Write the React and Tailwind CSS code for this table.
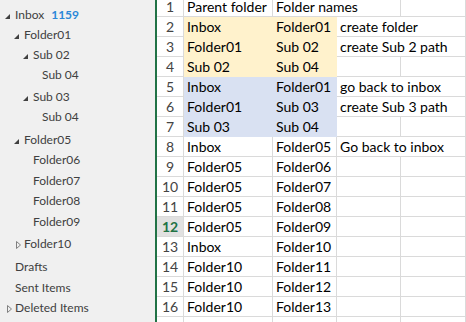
import React from "react"

const tree = [
  { label: "Inbox", level: 0, icon: "open", count: "1159" },
  { label: "Folder01", level: 1, icon: "open" },
  { label: "Sub 02", level: 2, icon: "open" },
  { label: "Sub 04", level: 3 },
  { label: "Sub 03", level: 2, icon: "open", mt: "mt-[2px]" },
  { label: "Sub 04", level: 3 },
  { label: "Folder05", level: 1, icon: "open", mt: "mt-[3px]" },
  { label: "Folder06", level: 2 },
  { label: "Folder07", level: 2, mt: "mt-[1px]" },
  { label: "Folder08", level: 2 },
  { label: "Folder09", level: 2, mt: "mt-[1px]" },
  { label: "Folder10", level: 1, icon: "closed", mt: "mt-[2px]" },
  { label: "Drafts", level: 0, mt: "mt-[3px]" },
  { label: "Sent Items", level: 0, mt: "mt-[1px]" },
  { label: "Deleted Items", level: 0, icon: "closed" },
]

const indent = ["pl-[5px]", "pl-[14px]", "pl-[23px]", "pl-[32px]"]

// fill: y = yellow, b = blue
const rows = [
  { n: 1, a: "Parent folder", b: "Folder names", spanB: true },
  { n: 2, a: "Inbox", b: "Folder01", c: "create folder", fill: "y" },
  { n: 3, a: "Folder01", b: "Sub 02", c: "create Sub 2 path", fill: "y" },
  { n: 4, a: "Sub 02", b: "Sub 04", fill: "y" },
  { n: 5, a: "Inbox", b: "Folder01", c: "go back to inbox", fill: "b" },
  { n: 6, a: "Folder01", b: "Sub 03", c: "create Sub 3 path", fill: "b" },
  { n: 7, a: "Sub 03", b: "Sub 04", fill: "b" },
  { n: 8, a: "Inbox", b: "Folder05", c: "Go back to inbox" },
  { n: 9, a: "Folder05", b: "Folder06" },
  { n: 10, a: "Folder05", b: "Folder07" },
  { n: 11, a: "Folder05", b: "Folder08" },
  { n: 12, a: "Folder05", b: "Folder09", active: true },
  { n: 13, a: "Inbox", b: "Folder10" },
  { n: 14, a: "Folder10", b: "Folder11" },
  { n: 15, a: "Folder10", b: "Folder12" },
  { n: 16, a: "Folder10", b: "Folder13" },
  { n: 17, a: "Folder10", b: "Folder14" },
]

const fills = {
  y: "bg-[#fff2cc] border-[#fff2cc]",
  b: "bg-[#d9e1f2] border-[#d9e1f2]",
}

const Arrow = ({ type }) => {
  if (type === "open") {
    return (
      <svg width="5" height="5" viewBox="0 0 5 5" className="mt-[2px]">
        <polygon points="5,0 5,5 0,5" fill="#404040" />
      </svg>
    )
  }
  if (type === "closed") {
    return (
      <svg width="5" height="8" viewBox="0 0 5 8" className="ml-[2px] mt-[1px]">
        <polygon points="0.5,0.5 4.5,4 0.5,7.5" fill="none" stroke="#808080" strokeWidth="1" />
      </svg>
    )
  }
  return null
}

const Cell = ({ w, fill, children }) => (
  <div
    className={`h-full shrink-0 border-r border-b pl-[3px] flex items-center whitespace-nowrap overflow-visible ${w} ${
      fill ? fills[fill] : "border-[#dadada]"
    }`}
  >
    {children}
  </div>
)

export default function App() {
  return (
    <div className="w-[466px] h-[322px] overflow-hidden flex bg-white">
      <div
        className="w-[155px] shrink-0 bg-[#f0f0f0] pt-[5px] flex flex-col text-[12px] text-[#404040]"
        style={{ fontFamily: '"Segoe UI", Lato, sans-serif' }}
      >
        {tree.map((t, i) => (
          <div key={i} className={`h-[20px] flex items-center ${indent[t.level]} ${t.mt || ""}`}>
            <div className="w-[10px] shrink-0 flex items-center">
              <Arrow type={t.icon} />
            </div>
            <span className="whitespace-nowrap">{t.label}</span>
            {t.count && <span className="ml-[7px] font-bold text-[#2b88d8]">{t.count}</span>}
          </div>
        ))}
      </div>
      <div className="w-[2px] shrink-0 bg-[#217346]" />
      <div className="flex-1 overflow-hidden">
        <div
          className="-mt-[3px] flex flex-col text-[14px] text-black"
          style={{ fontFamily: 'Lato, "Liberation Sans", sans-serif' }}
        >
          {rows.map((r) => (
            <div key={r.n} className="h-[20px] flex">
              <div
                className={`w-[27px] h-full shrink-0 border-r border-b border-[#dadada] flex items-center justify-center ${
                  r.active ? "bg-[#e1e1e1] text-[#217346] font-bold" : "text-[#444]"
                }`}
              >
                {r.n}
              </div>
              <Cell w="w-[89px]" fill={r.fill}>{r.a}</Cell>
              {r.spanB ? (
                <>
                  <Cell w="w-[128px]">{r.b}</Cell>
                  <Cell w="w-[65px]" />
                </>
              ) : (
                <>
                  <Cell w="w-[64px]" fill={r.fill}>{r.b}</Cell>
                  {r.c ? (
                    <Cell w="w-[129px]">{r.c}</Cell>
                  ) : (
                    <>
                      <Cell w="w-[64px]" />
                      <Cell w="w-[65px]" />
                    </>
                  )}
                </>
              )}
            </div>
          ))}
        </div>
      </div>
    </div>
  )
}
